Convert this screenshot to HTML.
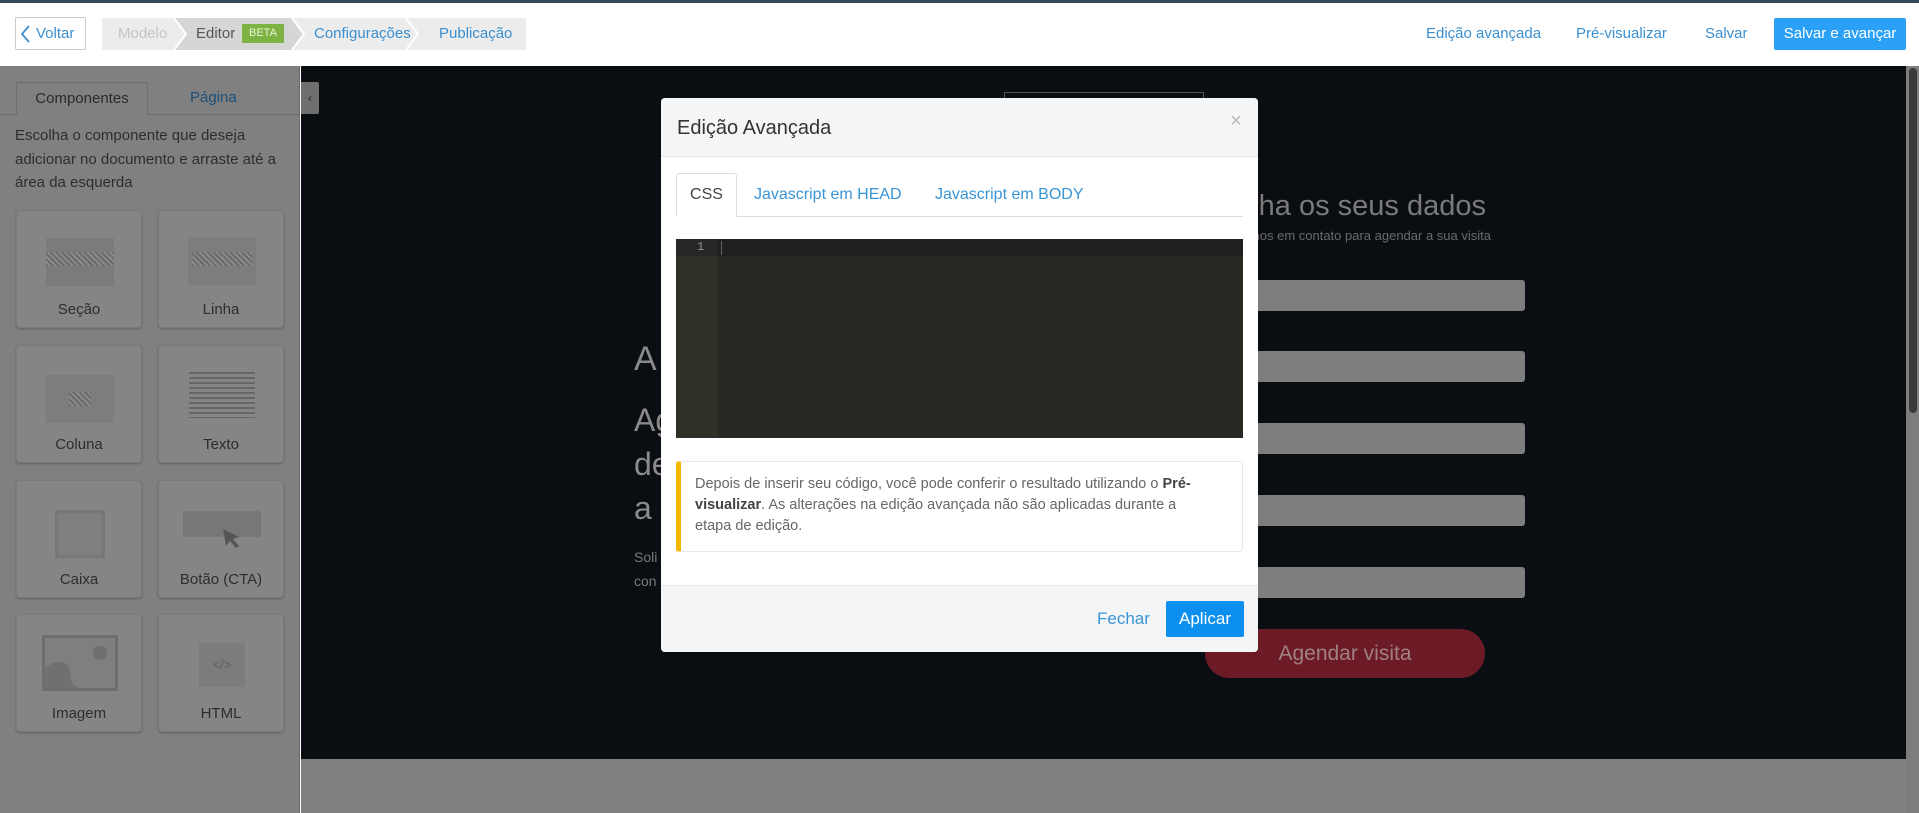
<!DOCTYPE html>
<html><head><meta charset="utf-8">
<style>
*{box-sizing:border-box;margin:0;padding:0}
body{width:1919px;height:813px;overflow:hidden;font-family:"Liberation Sans","DejaVu Sans",sans-serif;background:#fff;position:relative}
.a{position:absolute}
.topline{left:0;top:0;width:1919px;height:3px;background:#34495e}
.hdr{left:0;top:3px;width:1919px;height:63px;background:#fff}
.btn-back{left:15px;top:17px;width:71px;height:33px;border:1px solid #c8cdd2;border-radius:2px;color:#3a8fd0;font-size:15px;line-height:31px;padding-left:20px}
.crumbs{left:102px;top:18px;width:424px;height:32px;background:#ececec;border-radius:2px}
.crumbs span{position:absolute;top:0;line-height:32px;font-size:15px}
.link{top:18px;line-height:32px;font-size:15px;color:#3a8fd0}
.primary{left:1774px;top:18px;width:132px;height:32px;background:#2aa1f7;color:#fff;font-size:15px;line-height:32px;text-align:center;border-radius:2px}
.side{left:0;top:66px;width:300px;height:747px;background:#808080;border-right:1px solid #6a6a6a}
.tab1{left:16px;top:82px;width:132px;height:33px;border:1px solid #6e6e6e;border-bottom:none;background:#808080;color:#2a2a2a;font-size:15px;text-align:center;line-height:32px}
.tabline{left:0;top:114px;width:300px;height:1px;background:#6e6e6e}
.tab2{left:190px;top:82px;color:#1d4f78;font-size:15px;line-height:32px}
.desc{left:15px;top:124px;width:280px;font-size:15px;line-height:23.5px;color:#2d2d2d}
.card{width:126px;height:118px;background:#858585;border:1px solid #7a7a7a;border-radius:4px;box-shadow:0 1px 2px rgba(0,0,0,.25)}
.card .lb{position:absolute;left:0;right:0;bottom:9px;text-align:center;color:#2d2d2d;font-size:15px}
.toggle{left:301px;top:82px;width:18px;height:32px;background:#6f6f6f;color:#222;font-size:12px;text-align:center;line-height:32px;border-radius:0 2px 2px 0}
.canvas{left:301px;top:66px;width:1605px;height:693px;background:#0a0d12}
.below{left:301px;top:759px;width:1605px;height:54px;background:#808080}
.sb{left:1906px;top:66px;width:13px;height:747px;background:#7d7d7d}
.thumb{left:1909px;top:68px;width:8px;height:345px;background:#3a3a3a;border-radius:4px}
.inp{left:1240px;width:285px;height:31px;background:#7e7e7e;border-radius:3px}
.modal{left:661px;top:98px;width:597px;height:554px;background:#fff;border-radius:4px;overflow:hidden}
.mh{left:0;top:0;width:597px;height:59px;background:#f4f5f7;border-bottom:1px solid #e3e5e8}
.mf{left:0;top:487px;width:597px;height:67px;background:#f4f5f7;border-top:1px solid #e3e5e8}
</style></head><body>
<div class="a topline"></div>
<div class="a hdr"></div>
<div class="a btn-back"><svg class="a" style="left:4px;top:7px" width="12" height="18" viewBox="0 0 12 18"><path d="M9 1L2 9l7 8" fill="none" stroke="#3a8fd0" stroke-width="1.8"/></svg>Voltar</div>
<div class="a crumbs">
<svg class="a" style="left:0;top:0" width="424" height="32"><path d="M72 0h0L84 16 72 32H0V0z" fill="#ececec"/><path d="M72 0h118l12 16-12 16H72l12-16z" fill="#d6d6d6"/><path d="M190 0l12 16-12 16" fill="none" stroke="#fff" stroke-width="2"/><path d="M72 0l12 16-12 16" fill="none" stroke="#fff" stroke-width="2"/><path d="M304 0l12 16-12 16" fill="none" stroke="#fff" stroke-width="2"/></svg>
<span style="left:16px;color:#c4c4c4">Modelo</span>
<span style="left:94px;color:#555">Editor</span>
<span style="left:140px;top:6px;height:19px;line-height:19px;background:#7cb342;color:#e8f5d8;font-size:11px;padding:0 7px">BETA</span>
<span style="left:212px;color:#3a8fd0">Configurações</span>
<span style="left:337px;color:#3a8fd0">Publicação</span>
</div>
<div class="a link" style="left:1426px">Edição avançada</div>
<div class="a link" style="left:1576px">Pré-visualizar</div>
<div class="a link" style="left:1705px">Salvar</div>
<div class="a primary">Salvar e avançar</div>

<div class="a side"></div>
<div class="a tabline"></div>
<div class="a tab1">Componentes</div>
<div class="a tab2">Página</div>
<div class="a desc">Escolha o componente que deseja adicionar no documento e arraste até a área da esquerda</div>

<div class="a card" style="left:16px;top:210px"><div class="a" style="left:29px;top:27px;width:68px;height:48px;background:#7b7b7b"></div><div class="a" style="left:29px;top:41px;width:68px;height:14px;background:repeating-linear-gradient(45deg,#6a6a6a 0 2px,#8a8a8a 2px 4px)"></div><div class="lb">Seção</div></div>
<div class="a card" style="left:158px;top:210px"><div class="a" style="left:29px;top:27px;width:68px;height:48px;background:#7d7d7d"></div><div class="a" style="left:33px;top:41px;width:60px;height:14px;background:repeating-linear-gradient(45deg,#6a6a6a 0 2px,#8a8a8a 2px 4px)"></div><div class="lb">Linha</div></div>
<div class="a card" style="left:16px;top:345px"><div class="a" style="left:29px;top:29px;width:68px;height:48px;background:#7d7d7d"></div><div class="a" style="left:52px;top:46px;width:22px;height:14px;background:repeating-linear-gradient(45deg,#6a6a6a 0 2px,#8a8a8a 2px 4px)"></div><div class="lb">Coluna</div></div>
<div class="a card" style="left:158px;top:345px"><div class="a" style="left:30px;top:26px;width:66px;height:46px;background:repeating-linear-gradient(#666 0 2px,transparent 2px 5px)"></div><div class="lb">Texto</div></div>
<div class="a card" style="left:16px;top:480px"><div class="a" style="left:38px;top:29px;width:50px;height:48px;border:3px solid #777;background:#7f7f7f"></div><div class="lb">Caixa</div></div>
<div class="a card" style="left:158px;top:480px"><div class="a" style="left:24px;top:30px;width:78px;height:26px;background:#777;border-radius:3px"></div><svg class="a" style="left:62px;top:46px" width="22" height="22"><path d="M2 2l16 8-6 2 6 7-3 2-6-7-4 5z" fill="#555"/></svg><div class="lb">Botão (CTA)</div></div>
<div class="a card" style="left:16px;top:614px"><div class="a" style="left:25px;top:20px;width:76px;height:56px;border:3px solid #6e6e6e;background:#7f7f7f"></div><svg class="a" style="left:28px;top:23px" width="70" height="50"><path d="M0 30c10-8 20-8 24 0s-2 14 10 20H0z" fill="#707070"/><circle cx="55" cy="15" r="7" fill="#6f6f6f"/></svg><div class="lb">Imagem</div></div>
<div class="a card" style="left:158px;top:614px"><div class="a" style="left:40px;top:28px;width:46px;height:44px;background:#7c7c7c;color:#5e5e5e;font-size:13px;text-align:center;line-height:44px">&lt;/&gt;</div><div class="lb">HTML</div></div>

<div class="a canvas"></div>
<div class="a toggle">‹</div>
<div class="a below"></div>
<div class="a sb"></div><div class="a thumb"></div>

<div class="a" style="left:1004px;top:92px;width:200px;height:8px;border:1px solid #555;border-bottom:none"></div>
<div class="a" style="right:433px;top:190px;font-size:29px;color:#7a7a7a;white-space:nowrap">Preencha os seus dados</div>
<div class="a" style="right:428px;top:228px;font-size:13px;color:#6a6a6a;white-space:nowrap">Entraremos em contato para agendar a sua visita</div>
<div class="a inp" style="top:280px"></div>
<div class="a inp" style="top:351px"></div>
<div class="a inp" style="top:423px"></div>
<div class="a inp" style="top:495px"></div>
<div class="a inp" style="top:567px"></div>
<div class="a" style="left:1205px;top:629px;width:280px;height:49px;background:#6b1a26;border-radius:25px;color:#a08084;font-size:21px;text-align:center;line-height:49px">Agendar visita</div>
<div class="a" style="left:634px;top:340px;font-size:34px;color:#8a8a8a">A</div>
<div class="a" style="left:634px;top:398px;font-size:32px;color:#8a8a8a;line-height:44px">Ag<br>de<br>a</div>
<div class="a" style="left:634px;top:545px;font-size:14px;color:#7a7a7a;line-height:24px">Soli<br>con</div>

<div class="a modal">
<div class="a mh"></div>
<div class="a" style="left:16px;top:19px;font-size:20px;color:#333">Edição Avançada</div>
<div class="a" style="left:569px;top:12px;font-size:20px;color:#b8b8b8">×</div>
<div class="a" style="left:15px;top:118px;width:567px;height:1px;background:#ddd"></div>
<div class="a" style="left:15px;top:75px;width:61px;height:44px;background:#fff;border:1px solid #ddd;border-bottom:1px solid #fff;border-radius:3px 3px 0 0;text-align:center;line-height:42px;font-size:16px;color:#444">CSS</div>
<div class="a" style="left:93px;top:75px;line-height:44px;font-size:16px;color:#3a95d5">Javascript em HEAD</div>
<div class="a" style="left:274px;top:75px;line-height:44px;font-size:16px;color:#3a95d5">Javascript em BODY</div>
<div class="a" style="left:15px;top:141px;width:567px;height:199px;background:#272822"></div>
<div class="a" style="left:15px;top:141px;width:42px;height:199px;background:#2f3129"></div>
<div class="a" style="left:57px;top:141px;width:525px;height:17px;background:#202020"></div>
<div class="a" style="left:15px;top:141px;width:42px;height:17px;background:#272727"></div>
<div class="a" style="left:36px;top:141px;font-size:12px;line-height:17px;color:#8f908a;font-family:'Liberation Mono',monospace">1</div>
<div class="a" style="left:60px;top:143px;width:1px;height:14px;background:#666"></div>
<div class="a" style="left:15px;top:363px;width:567px;height:91px;border:1px solid #e8e8e8;border-left:5px solid #f5b800;border-radius:3px"></div>
<div class="a" style="left:34px;top:376px;width:515px;font-size:14.5px;line-height:21px;color:#666">Depois de inserir seu código, você pode conferir o resultado utilizando o <b style="color:#444">Pré-visualizar</b>. As alterações na edição avançada não são aplicadas durante a etapa de edição.</div>
<div class="a mf"></div>
<div class="a" style="left:436px;top:503px;line-height:36px;font-size:17px;color:#3a95d5">Fechar</div>
<div class="a" style="left:505px;top:503px;width:78px;height:36px;background:#0d8ff0;color:#fff;font-size:17px;text-align:center;line-height:36px;border-radius:2px">Aplicar</div>
</div>
</body></html>
